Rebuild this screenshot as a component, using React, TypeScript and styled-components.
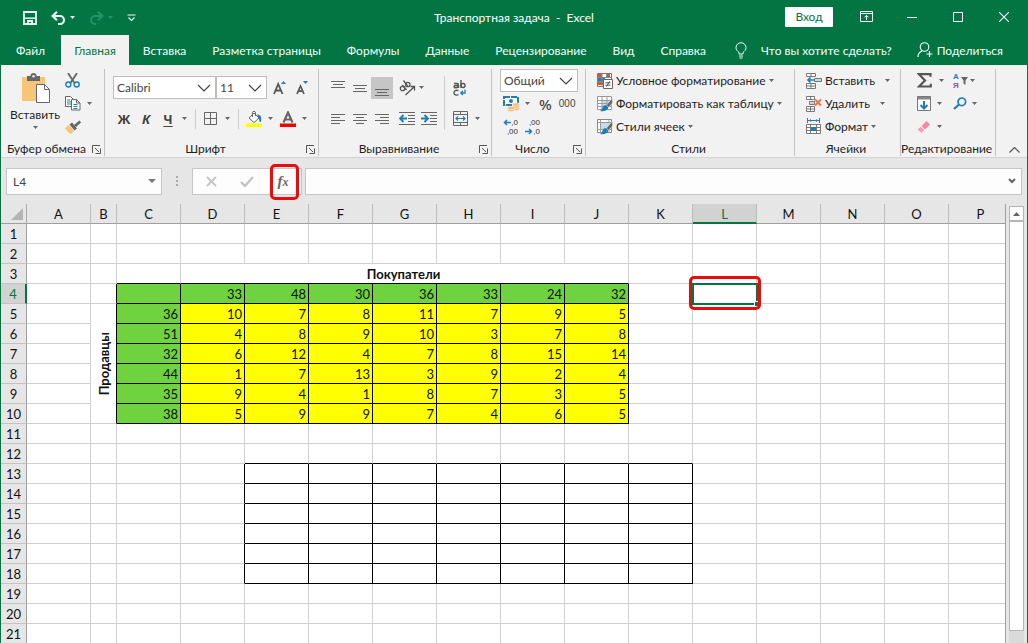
import React from "react";
import styled, { createGlobalStyle, css } from "styled-components";

const GREEN = "#037543";
const INK = "#1f1f1f";
const GREY = "#666";
const BLUE = "#1e7fb8";

const UI = `Lato, "Noto Sans", sans-serif`;
const GLYPH = `"Noto Sans", sans-serif`;
const TINY = `"Liberation Sans", Arial, sans-serif`;

const GlobalStyle = createGlobalStyle`
  *, *::before, *::after { box-sizing: border-box; }
  body { margin: 0; font-family: ${UI}; font-size: 12px; color: ${INK}; }
  button, input, select { font: inherit; color: inherit; margin: 0; }
  button { border: 0; background: none; padding: 0; cursor: pointer; }
  svg { display: block; flex: none; }
`;

/* ---------- window frame ---------- */

const Window = styled.div`
  height: 100vh;
  display: flex;
  flex-direction: column;
  overflow: hidden;
  background: #e6e6e6;
  border-left: 1px solid ${GREEN};
  border-right: 1px solid ${GREEN};
`;

const TitleBar = styled.header`
  flex: none;
  height: 35px;
  display: grid;
  grid-template-columns: 1fr auto 1fr;
  align-items: center;
  background: ${GREEN};
  color: #fff;
`;

const QuickAccess = styled.div`
  display: flex;
  align-items: center;
  gap: 14px;
  padding-left: 22px;
`;

const QuickButton = styled.button<{ $faded?: boolean }>`
  display: flex;
  align-items: center;
  gap: 4px;
  height: 22px;
  color: ${(p) => (p.$faded ? "#1f9464" : "#e9fff4")};
`;

const Title = styled.h1`
  margin: 0;
  font-size: 12px;
  font-weight: 400;
  white-space: pre;
`;

const WindowControls = styled.div`
  display: flex;
  justify-content: flex-end;
  align-items: center;
  align-self: start;
`;

const SignIn = styled.button`
  height: 20px;
  width: 48px;
  margin-right: 10px;
  background: #fff;
  color: ${GREEN};
  border-radius: 1px;
`;

const ControlButton = styled.button`
  width: 46px;
  height: 33px;
  display: grid;
  place-items: center;
`;

const TabBar = styled.nav`
  flex: none;
  height: 30px;
  display: flex;
  background: ${GREEN};
  color: #fff;
  padding-left: 2px;
`;

const Tab = styled.button<{ $active?: boolean }>`
  padding: 0 13px;
  white-space: nowrap;
  color: ${(p) => (p.$active ? GREEN : "#f2fff9")};
  background: ${(p) => (p.$active ? "#f2f2f2" : "transparent")};
  ${(p) => p.$active && css`margin: 0 1px 0 3px;`}
`;

const TabAction = styled.button<{ $gap: number; $push?: boolean }>`
  display: flex;
  align-items: center;
  gap: ${(p) => p.$gap}px;
  white-space: nowrap;
  color: #f2fff9;
  margin-left: ${(p) => (p.$push ? "auto" : "16px")};
  margin-right: ${(p) => (p.$push ? "24px" : "0")};
`;

/* ---------- ribbon ---------- */

const Ribbon = styled.div`
  flex: none;
  height: 93px;
  display: flex;
  background: #f2f2f2;
  border-bottom: 1px solid #d2d2d2;
`;

const Group = styled.section<{ $width: number }>`
  flex: 0 0 ${(p) => p.$width}px;
  margin: 4px 0 1px;
  display: flex;
  flex-direction: column;
  border-right: 1px solid #c3c3c3;
`;

const GroupBody = styled.div`
  flex: 1;
  display: flex;
`;

const GroupFooter = styled.footer`
  height: 14px;
  display: flex;
  align-items: center;
  padding-right: 3px;
  white-space: nowrap;
`;

const GroupName = styled.span`
  flex: 1;
  text-align: center;
  line-height: 14px;
`;

const Stack = styled.div<{ $pad?: number }>`
  display: flex;
  flex-direction: column;
  padding-left: ${(p) => p.$pad ?? 0}px;
`;

/* Three 23px lines shared by the groups with small buttons. */
const Line = styled.div<{ $gap?: number }>`
  height: 23px;
  display: flex;
  align-items: center;
  gap: ${(p) => p.$gap ?? 0}px;
`;

/* Two taller lines used by the font and alignment groups. */
const TallStack = styled(Stack)`
  padding-top: 7px;
  gap: 8px;
`;

const TallLine = styled.div`
  height: 23px;
  display: flex;
  align-items: center;
`;

const ToolButton = styled.button<{ $gap?: number }>`
  display: flex;
  align-items: center;
  gap: ${(p) => p.$gap ?? 3}px;
  white-space: nowrap;
`;

const SquareButton = styled.button<{ $active?: boolean }>`
  width: 22px;
  height: 22px;
  display: grid;
  place-items: center;
  background: ${(p) => (p.$active ? "#c6c6c6" : "transparent")};
`;

const LetterButton = styled.button<{ $look: "bold" | "italic" | "underline" }>`
  width: 22px;
  height: 22px;
  font-family: ${GLYPH};
  font-size: 13px;
  font-weight: 700;
  color: #444;
  font-style: ${(p) => (p.$look === "italic" ? "italic" : "normal")};
  text-decoration: ${(p) => (p.$look === "underline" ? "underline" : "none")};
  text-underline-offset: 2px;
`;

const Divider = styled.span<{ $tall?: boolean }>`
  width: 1px;
  height: ${(p) => (p.$tall ? 54 : 20)}px;
  background: #cfcfcf;
`;

const PasteButton = styled.button`
  width: 56px;
  margin-left: 6px;
  padding-top: 4px;
  display: flex;
  flex-direction: column;
  align-items: center;
  gap: 3px;
  line-height: 16px;
  align-self: flex-start;
`;

const Combo = styled.label<{ $width: number }>`
  width: ${(p) => p.$width}px;
  height: 23px;
  display: grid;
  grid-template-columns: 1fr 22px;
  align-items: center;
  background: #fff;
  border: 1px solid #bdbdbd;
  color: #444;
`;

const ComboSelect = styled.select`
  grid-area: 1 / 1 / 2 / 3;
  width: 100%;
  height: 21px;
  border: 0;
  padding: 0 0 0 3px;
  background: transparent;
  appearance: none;
  outline: none;
`;

const ComboArrow = styled.span`
  grid-area: 1 / 2;
  justify-self: center;
  pointer-events: none;
`;

const CollapseButton = styled.button`
  margin-left: auto;
  width: 26px;
  display: flex;
  justify-content: center;
  align-items: flex-end;
  padding-bottom: 4px;
`;

/* ---------- formula bar ---------- */

const FormulaBar = styled.div`
  flex: none;
  height: 46px;
  display: flex;
  align-items: center;
  padding: 0 5px;
`;

const FieldBox = styled.label<{ $width?: number }>`
  height: 27px;
  ${(p) => (p.$width ? css`flex: none; width: ${p.$width}px;` : css`flex: 1;`)}
  display: flex;
  align-items: center;
  background: #fdfdfd;
  border: 1px solid #c6c6c6;
  padding-right: 5px;
`;

const Field = styled.input`
  flex: 1;
  min-width: 0;
  height: 23px;
  border: 0;
  outline: 0;
  background: transparent;
  padding: 0 6px;
  color: #444;
`;

const Grip = styled.span`
  width: 30px;
  display: grid;
  place-items: center;
`;

const FormulaButtons = styled.div`
  height: 27px;
  width: 110px;
  margin-right: 3px;
  display: flex;
  align-items: center;
  background: #fdfdfd;
  border: 1px solid #c6c6c6;
`;

const FormulaButton = styled.button`
  position: relative;
  width: 36px;
  height: 25px;
  display: grid;
  place-items: center;
`;

const FxText = styled.span`
  font-family: "Liberation Serif", serif;
  font-style: italic;
  font-weight: 700;
  font-size: 15px;
  line-height: 20px;
  color: #666;
  small {
    font-size: 12px;
  }
`;

const Highlight = styled.span<{ $inset: string }>`
  position: absolute;
  inset: ${(p) => p.$inset};
  border: 3px solid #e80c0c;
  border-radius: 5px;
  pointer-events: none;
`;

/* ---------- sheet ---------- */

const SheetArea = styled.main`
  flex: 1;
  min-height: 0;
  display: flex;
  overflow: hidden;
`;

const SheetClip = styled.div`
  flex: 1;
  min-width: 0;
  overflow: hidden;
  border-right: 1px solid #9f9f9f;
`;

/* The last column runs a little way under the scroll bar. */
const Grid = styled.table`
  width: calc(100% + 8px);
  table-layout: fixed;
  border-collapse: separate;
  border-spacing: 0;
  background: #fff;
  font-size: 13px;
  line-height: 16px;
  color: #111;
`;

const headBase = css`
  padding: 0;
  font-weight: 400;
  text-align: center;
  background: #e6e6e6;
  height: 20px;
`;

const Corner = styled.th`
  ${headBase}
  border-bottom: 1px solid #9f9f9f;
  border-right: 1px solid #ababab;
  svg { margin-left: auto; margin-right: 3px; }
`;

const ColHead = styled.th<{ $active?: boolean }>`
  ${headBase}
  padding-top: 1px;
  border-right: 1px solid #bcbcbc;
  border-bottom: 1px solid #9f9f9f;
  ${(p) =>
    p.$active &&
    css`
      background: #d2d2d2;
      color: ${GREEN};
      border-bottom: 2px solid ${GREEN};
    `}
`;

const RowHead = styled.th<{ $active?: boolean }>`
  ${headBase}
  border-bottom: 1px solid #c3c3c3;
  border-right: 1px solid #9f9f9f;
  ${(p) =>
    p.$active &&
    css`
      background: #d2d2d2;
      color: ${GREEN};
      border-right: 2px solid ${GREEN};
    `}
`;

type Fill = "none" | "green" | "yellow";
const FILLS: Record<Fill, string> = { none: "#fff", green: "#6fd33f", yellow: "#ffff00" };

const Cell = styled.td<{ $fill: Fill; $right: boolean; $bottom: boolean; $selected?: boolean }>`
  ${(p) => p.$selected && css`position: relative;`}
  height: 20px;
  padding: 0 2px 0 0;
  text-align: right;
  background: ${(p) => FILLS[p.$fill]};
  border-right: 1px solid ${(p) => (p.$right ? "#000" : "#d0d0d0")};
  border-bottom: 1px solid ${(p) => (p.$bottom ? "#000" : "#d0d0d0")};
`;

const MergedTitle = styled(Cell)`
  text-align: center;
  font-weight: 700;
`;

const MergedSide = styled(Cell)`
  padding: 0;
  font-weight: 700;
`;

const SideText = styled.span`
  display: block;
  margin: 0 auto;
  width: 16px;
  writing-mode: vertical-rl;
  transform: rotate(180deg);
`;

const Selection = styled.span`
  position: absolute;
  inset: -1px -2px -2px -1px;
  border: 2px solid ${GREEN};
  &::after {
    content: "";
    position: absolute;
    right: -3px;
    bottom: -3px;
    width: 5px;
    height: 5px;
    background: ${GREEN};
    border-left: 1px solid #fff;
    border-top: 1px solid #fff;
  }
`;

const ScrollBar = styled.div`
  flex: none;
  width: 21px;
  padding: 2px 3px 0 3px;
  display: flex;
  flex-direction: column;
`;

const ScrollUp = styled.button`
  height: 15px;
  display: grid;
  place-items: center;
  background: #fff;
  border: 1px solid #b5b5b5;
`;

const ScrollTrack = styled.div`
  flex: 1;
  background: #dadada;
  padding-bottom: 12px;
  display: flex;
`;

const ScrollThumb = styled.div`
  flex: 1;
  background: #fff;
  border: 1px solid #b5b5b5;
`;

/* ---------- icons ---------- */

type SvgProps = { w: number; h: number; children: React.ReactNode };
const Svg = ({ w, h, children }: SvgProps) => (
  <svg width={w} height={h} viewBox={`0 0 ${w} ${h}`} fill="none" aria-hidden="true">
    {children}
  </svg>
);

const Caret = ({ color = GREY }: { color?: string }) => (
  <Svg w={5} h={3}><path d="M0 0h5L2.500 3z" fill={color} /></Svg>
);

const Chevron = () => (
  <Svg w={14} h={8}><path d="M1 1l6 6 6-6" stroke="#444" strokeWidth="1.200" /></Svg>
);

const Launcher = () => (
  <Svg w={9} h={9}>
    <path d="M.5 8V.5H8M3 3l4 4M8.500 3.500V8.500H3.500" stroke="#555" />
  </Svg>
);

const SaveIcon = () => (
  <Svg w={14} h={14}>
    <path d="M1 1h12v12H1z" stroke="currentColor" strokeWidth="1.800" />
    <path d="M1 7.200h12" stroke="currentColor" strokeWidth="1.500" />
    <path d="M4 9h6v4H8v-2H6v2H4z" fill="currentColor" />
  </Svg>
);

const UndoIcon = () => (
  <Svg w={15} h={14}>
    <path d="M2 5h7a4 4 0 0 1 0 8H7" stroke="currentColor" strokeWidth="2.200" />
    <path d="M6 .8L1.600 5 6 9.200" stroke="currentColor" strokeWidth="2.200" />
  </Svg>
);

const RedoIcon = () => (
  <Svg w={15} h={14}>
    <path d="M13 5H6a4 4 0 0 0 0 8h1" stroke="currentColor" strokeWidth="2" />
    <path d="M9 .8L13.400 5 9 9.200" stroke="currentColor" strokeWidth="2" />
  </Svg>
);

const CustomizeIcon = () => (
  <Svg w={9} h={8}>
    <path d="M.5 1h8M1.500 3.500l3 3 3-3" stroke="currentColor" strokeWidth="1.200" />
  </Svg>
);

const BulbIcon = () => (
  <Svg w={12} h={17}>
    <path d="M4 12V10.500C2.500 9 1 8 1 5.700a5 5 0 0 1 10 0C11 8 9.500 9 8 10.500V12zM4 14h4M4.500 16h3" stroke="currentColor" />
  </Svg>
);

const ShareIcon = () => (
  <Svg w={16} h={16}>
    <circle cx="7.500" cy="5" r="4.300" stroke="currentColor" strokeWidth="1.100" />
    <path d="M1 15c0-3 1.500-5 4-6M12.500 9v6M9.500 12h6" stroke="currentColor" strokeWidth="1.200" />
  </Svg>
);

const RibbonOptionsIcon = () => (
  <Svg w={13} h={11}>
    <path d="M.5.5h12v10H.5zM.5 2.500h12M6.500 9V4.500M4.500 6.300l2-2 2 2" stroke="#fff" />
  </Svg>
);

const PasteIcon = () => (
  <Svg w={29} h={31}>
    <path d="M1 4h23v24H1z" fill="#f6c577" />
    <path d="M6 3h3.500a3 3 0 0 1 6 0H19v5H6z" fill="#666" />
    <circle cx="12.500" cy="3.300" r="1.200" fill="#f2f2f2" />
    <path d="M15.500 11.500h8l5 5v13h-13z" fill="#fff" stroke="#666" />
    <path d="M23.500 11.500v5h5" stroke="#666" />
  </Svg>
);

const ScissorsIcon = () => (
  <Svg w={15} h={15}>
    <path d="M3 0l6.500 10M12 0L5.500 10" stroke="#666" strokeWidth="1.800" />
    <circle cx="3.300" cy="11.500" r="2.500" stroke={BLUE} strokeWidth="1.400" />
    <circle cx="11.700" cy="11.500" r="2.500" stroke={BLUE} strokeWidth="1.400" />
  </Svg>
);

const CopyIcon = () => (
  <Svg w={16} h={15}>
    <path d="M.5.5h5l3 3v7h-8z" fill="#fff" stroke="#666" />
    <path d="M2 4h3M2 6h4M2 8h4" stroke={BLUE} />
    <path d="M6.500 3.500h5l3.500 3.500v7H6.500z" fill="#fff" stroke="#666" />
    <path d="M11.500 3.500V7H15" stroke="#666" />
    <path d="M8.500 8.500h4M8.500 10.500h4M8.500 12.500h4" stroke={BLUE} />
  </Svg>
);

const BrushIcon = () => (
  <Svg w={16} h={14}>
    <path d="M0 8l4-3 5 6-3 3C4 13 1 10 0 8z" fill="#f6c577" />
    <path d="M4.500 4.500L7 2.500l5 6-2.500 2z" fill="#666" />
    <path d="M9 5l5.500-4.500L16 2.500 11 7z" fill="#666" />
  </Svg>
);

const GrowIcon = ({ up }: { up?: boolean }) => (
  <Svg w={14} h={15}>
    {up ? (
      <>
        <path d="M1 14L5.200 4 9.500 14M2.500 10.500H8" stroke="#555" strokeWidth="1.800" />
        <path d="M8 4l2.500-3L13 4z" fill={BLUE} />
      </>
    ) : (
      <>
        <path d="M2 14L5.500 6 9 14M3.200 11.200h4.600" stroke="#555" strokeWidth="1.700" />
        <path d="M8 1l2.500 3L13 1z" fill={BLUE} />
      </>
    )}
  </Svg>
);

const BordersIcon = () => (
  <Svg w={13} h={13}><path d="M.5.5h12v12H.5zM6.500.5v12M.5 6.500h12" stroke="#666" /></Svg>
);

const FillIcon = () => (
  <Svg w={16} h={16}>
    <path d="M3 7l5-5 5 5-5 4.500z" fill="#fff" stroke="#666" />
    <path d="M6.500 6V1.500c0-1.500 3-1.500 3 0V5" stroke="#666" />
    <path d="M11 3.500c3.500 0 5 2 4 7.500-1.500 0-2-1-2-4z" fill={BLUE} />
    <path d="M0 12.500h16v3.500H0z" fill="#ffff00" />
  </Svg>
);

const FontColorIcon = () => (
  <Svg w={16} h={16}>
    <path d="M3.500 11.500L8 1.500l4.500 10M5 8.500h6" stroke="#666" strokeWidth="2.200" />
    <path d="M0 12.500h16v3.500H0z" fill="#f00000" />
  </Svg>
);

const LINES = {
  left: "M0 1.500h14M0 4.500h9M0 7.500h14M0 10.500h9",
  center: "M0 1.500h14M3 4.500h8M0 7.500h14M3 10.500h8",
  right: "M0 1.500h14M5 4.500h9M0 7.500h14M5 10.500h9",
};

const AlignIcon = ({ kind }: { kind: keyof typeof LINES }) => (
  <Svg w={14} h={12}><path d={LINES[kind]} stroke="#666" /></Svg>
);

const VAlignIcon = ({ y }: { y: number }) => (
  <Svg w={14} h={20}>
    <path d={`M0 ${y}.5h14M2 ${y + 3}.5h10M0 ${y + 6}.5h14`} stroke="#666" />
  </Svg>
);

const OrientationIcon = () => (
  <Svg w={17} h={16}>
    <g stroke="#555" strokeWidth="1.300">
      <circle cx="3.500" cy="8.500" r="2.200" />
      <path d="M3.500 5l4 5" />
      <circle cx="8.800" cy="4.500" r="2.200" />
      <path d="M4.500 .5l4 5.500M6.500 15l9-8.500M11.500 6.500h4v4" />
    </g>
  </Svg>
);

const IndentIcon = ({ out }: { out?: boolean }) => (
  <Svg w={16} h={13}>
    <path d="M0 .5h16M9 3.500h7M9 6.500h7M9 9.500h7M0 12.500h16" stroke="#666" />
    <path d={out ? "M8 6.500H2M4.500 3L1 6.500 4.500 10" : "M0 6.500h6M3.500 3L7 6.500 3.500 10"} stroke={BLUE} strokeWidth="1.900" />
  </Svg>
);

const WrapIcon = () => (
  <Svg w={13} h={16}>
    <g stroke="#555" strokeWidth="1.400">
      <path d="M1 3.500h3c1 0 1.500.5 1.500 1.500v3M5.500 5.500H2.500c-1.800 0-1.800 2.300 0 2.300 1.500 0 3-.8 3-1.800" />
      <path d="M8 0v8" />
      <circle cx="10" cy="5.500" r="2" />
      <path d="M5.500 10.700c-2.500-1-4.500 0-4.500 2s2 3 4.500 2" />
    </g>
    <path d="M12 9.500v3.500H8M9.800 11l-2 2 2 2" stroke={BLUE} strokeWidth="1.300" />
  </Svg>
);

const MergeIcon = () => (
  <Svg w={15} h={15}>
    <path d="M.5.5h14v14H.5zM.5 3.500h14M.5 11.500h14M7.500.5v3M7.500 11.500v3" stroke="#666" />
    <path d="M2.500 7.500h10M5 5.500l-2 2 2 2M10 5.500l2 2-2 2" stroke={BLUE} strokeWidth="1.200" />
  </Svg>
);

const CurrencyIcon = () => (
  <Svg w={17} h={16}>
    <path d="M1 1h14v8H1z" fill="#fff" stroke={BLUE} strokeWidth="2" strokeDasharray="6 1" />
    <circle cx="8" cy="5" r="2" fill={BLUE} />
    <g fill="#f6bb78" stroke="#f2f2f2" strokeWidth=".6">
      <ellipse cx="13" cy="13" rx="3.500" ry="1.700" />
      <ellipse cx="13" cy="10.800" rx="3.500" ry="1.700" />
      <ellipse cx="13" cy="8.500" rx="3.500" ry="1.700" />
      <ellipse cx="8" cy="14" rx="3.500" ry="1.700" />
      <ellipse cx="8" cy="12" rx="3.500" ry="1.700" />
    </g>
  </Svg>
);

const CondFormatIcon = () => (
  <Svg w={16} h={16}>
    <path d="M.5.5h14v13H.5z" fill="#fff" stroke="#777" />
    <path d="M1 1h4v3H1zM9 1h4v3H9z" fill="#d9532c" />
    <path d="M1 5h7v3H1z" fill={BLUE} />
    <path d="M1 9h5v3H1z" fill="#d9532c" />
    <path d="M.5 4.500h14M.5 8.500h6M5 .5v13M9.500.5v4" stroke="#888" />
    <path d="M6.500 6.500h9v9h-9z" fill="#fff" stroke="#666" />
    <path d="M8.500 9.800h5M8.500 12.200h5M12.500 8.500l-3 5" stroke="#555" />
  </Svg>
);

const StyleBrush = () => (
  <>
    <path d="M7 9.500c3-1.500 5 0 4 3-1 2.500-4.500 3-8 2.500C5.500 14 5 11 7 9.500z" fill={BLUE} />
    <path d="M9.500 9L15.500 2v5L11.500 11.500z" fill="#666" stroke="#f2f2f2" strokeWidth=".5" />
  </>
);

const TableFormatIcon = () => (
  <Svg w={16} h={16}>
    <path d="M.5.5h14v13H.5z" fill="#fff" stroke="#999" />
    <path d="M5 4.500h9.500v6H5z" fill="#c6dcec" />
    <path d="M.5 4.500h14M.5 7.500h14M.5 10.500h14M5 .5v13M10 .5v13" stroke="#999" />
    <StyleBrush />
  </Svg>
);

const CellStyleIcon = () => (
  <Svg w={16} h={16}>
    <path d="M.5.5h14v13H.5z" fill="#fff" stroke="#888" />
    <path d="M.5 3.500h14M3.500.5v13M.5 10.500h14M12 .5v13" stroke="#999" />
    <path d="M4 4h8v6H4z" fill="#c6dcec" />
    <StyleBrush />
  </Svg>
);

const InsertCellsIcon = () => (
  <Svg w={16} h={16}>
    <path d="M.5.5h9v3h-9zM5 .5v3M.5 10.500h9v5h-9zM5 10.500v5M.5 13h9" fill="#fff" stroke="#777" />
    <path d="M8.500 5.500h7v3h-7z" fill="#c6dcec" stroke="#777" />
    <path d="M8 7H2M4.500 4.500L2 7l2.500 2.500" stroke={BLUE} strokeWidth="1.700" />
  </Svg>
);

const DeleteCellsIcon = () => (
  <Svg w={16} h={16}>
    <path d="M.5.5h8v3h-8zM4.500.5v3M.5 10.500h8v5h-8zM4.500 10.500v5M.5 13h8" fill="#fff" stroke="#777" />
    <path d="M3.500 5.500h5v3h-5z" fill="#c6dcec" stroke="#777" />
    <path d="M9 3.500l6 6M15 3.500l-6 6" stroke="#f0714a" strokeWidth="2" />
  </Svg>
);

const FormatCellsIcon = () => (
  <Svg w={16} h={17}>
    <path d="M1.500 2.500h12M1.500 0v5M13.500 0v5" stroke={BLUE} />
    <path d="M3 2.500l2-1.500v3zM12 2.500L10 1v3z" fill={BLUE} />
    <path d="M.5 6.500h14v9H.5z" fill="#fff" stroke="#777" />
    <path d="M.5 9.500h14M.5 12.500h14M4.500 6.500v9M10.500 6.500v9" stroke="#777" />
    <path d="M5 9h5v4H5z" fill={BLUE} />
  </Svg>
);

const SumIcon = () => (
  <Svg w={15} h={15}>
    <path d="M13.500 3.800V1.200H2L8 7.500 2 13.500h11.800V10.800" stroke="#555" strokeWidth="2.200" />
  </Svg>
);

const FunnelIcon = () => (
  <Svg w={7} h={8}><path d="M0 0h7L4.500 3.500V8l-2-1.500v-3z" fill="#666" /></Svg>
);

const FillDownIcon = () => (
  <Svg w={14} h={15}>
    <path d="M.5.5h13v14H.5z" fill="#fff" stroke="#777" />
    <path d="M1 1h12v2.500H1z" fill="#888" />
    <path d="M7 5v7M3.500 9L7 12.500 10.500 9" stroke={BLUE} strokeWidth="2" />
  </Svg>
);

const FindIcon = () => (
  <Svg w={14} h={13}>
    <circle cx="8.800" cy="4.800" r="3.800" stroke={BLUE} strokeWidth="1.700" />
    <path d="M6 7.500L1 12" stroke={BLUE} strokeWidth="2.200" />
  </Svg>
);

const EraserIcon = () => (
  <Svg w={13} h={12}>
    <path d="M4.500 5L9.500 0 13 3.500 8 8.500z" fill="#fb86a6" />
    <path d="M3.800 5.700L7.200 9.200 4.500 12 .5 8.500z" fill="#fb9db8" />
  </Svg>
);

const SortLetters = styled.span`
  display: flex;
  flex-direction: column;
  font-family: ${TINY};
  font-size: 8px;
  font-weight: 700;
  line-height: 9px;
  color: ${BLUE};
  b { color: #9a4fae; }
`;

const NumberGlyph = styled.button<{ $large?: boolean }>`
  font-family: ${(p) => (p.$large ? GLYPH : TINY)};
  font-size: ${(p) => (p.$large ? 15 : 10)}px;
  line-height: 16px;
  font-weight: ${(p) => (p.$large ? 500 : 400)};
  color: #444;
`;

const Decimal = styled.button`
  display: grid;
  grid-template-rows: 9px 9px;
  width: 15px;
  font-family: ${TINY};
  font-size: 8px;
  line-height: 9px;
  color: #333;
`;

const DecimalLine = styled.span`
  display: flex;
  justify-content: flex-end;
  align-items: center;
`;

const SmallArrow = ({ left }: { left?: boolean }) => (
  <Svg w={8} h={7}>
    <path d={left ? "M8 3.500H2M4 1L1.500 3.500 4 6" : "M0 3.500h6M4 1l2.500 2.500L4 6"} stroke={BLUE} strokeWidth="1.500" />
  </Svg>
);

const Spacer = styled.span<{ $w: number }>`
  flex: none;
  width: ${(p) => p.$w}px;
`;

/* ---------- data ---------- */

const TABS = ["Файл", "Главная", "Вставка", "Разметка страницы", "Формулы", "Данные", "Рецензирование", "Вид", "Справка"];
const COLS = "ABCDEFGHIJKLMNOP".split("");

const DATA: Record<number, (number | null)[]> = {
  4: [null, 33, 48, 30, 36, 33, 24, 32],
  5: [36, 10, 7, 8, 11, 7, 9, 5],
  6: [51, 4, 8, 9, 10, 3, 7, 8],
  7: [32, 6, 12, 4, 7, 8, 15, 14],
  8: [44, 1, 7, 13, 3, 9, 2, 4],
  9: [35, 9, 4, 1, 8, 7, 3, 5],
  10: [38, 5, 9, 9, 7, 4, 6, 5],
};

const inCosts = (r: number, c: number) => r >= 4 && r <= 10 && c >= 2 && c <= 9;
const inPlan = (r: number, c: number) => r >= 13 && r <= 18 && c >= 4 && c <= 10;
const boxed = (r: number, c: number) => inCosts(r, c) || inPlan(r, c);

const fillOf = (r: number, c: number): Fill =>
  !inCosts(r, c) ? "none" : r === 4 || c === 2 ? "green" : "yellow";

const SheetRow = ({ row }: { row: number }) => (
  <tr>
    <RowHead scope="row" $active={row === 4}>{row}</RowHead>
    {COLS.map((name, c) => {
      if (row === 3 && c === 3)
        return (
          <MergedTitle key={name} colSpan={7} $fill="none" $right={false} $bottom>
            Покупатели
          </MergedTitle>
        );
      if (row === 3 && c > 3 && c < 10) return null;
      if (row === 5 && c === 1)
        return (
          <MergedSide key={name} rowSpan={6} $fill="none" $right $bottom={false}>
            <SideText>Продавцы</SideText>
          </MergedSide>
        );
      if (row > 5 && row < 11 && c === 1) return null;
      const selected = row === 4 && name === "L";
      return (
        <Cell
          key={name}
          $fill={fillOf(row, c)}
          $right={boxed(row, c) || boxed(row, c + 1)}
          $bottom={boxed(row, c) || boxed(row + 1, c)}
          $selected={selected}
        >
          {inCosts(row, c) ? DATA[row][c - 2] : null}
          {selected && (
            <>
              <Selection />
              <Highlight $inset="-8px -5px -7px -4px" />
            </>
          )}
        </Cell>
      );
    })}
  </tr>
);

const Footer = ({ name, launcher }: { name: string; launcher?: boolean }) => (
  <GroupFooter>
    <GroupName>{name}</GroupName>
    {launcher && <button aria-label={`${name}: параметры`}><Launcher /></button>}
  </GroupFooter>
);

export default function App() {
  return (
    <Window>
      <GlobalStyle />
      <TitleBar>
        <QuickAccess>
          <QuickButton aria-label="Сохранить"><SaveIcon /></QuickButton>
          <QuickButton aria-label="Отменить"><UndoIcon /><Caret color="#e9fff4" /></QuickButton>
          <QuickButton aria-label="Вернуть" $faded><RedoIcon /><Caret color="#1f9464" /></QuickButton>
          <QuickButton aria-label="Настройка панели"><CustomizeIcon /></QuickButton>
        </QuickAccess>
        <Title>{"Транспортная задача  -  Excel"}</Title>
        <WindowControls>
          <SignIn>Вход</SignIn>
          <ControlButton aria-label="Параметры ленты"><RibbonOptionsIcon /></ControlButton>
          <ControlButton aria-label="Свернуть"><Svg w={10} h={10}><path d="M0 5.500h10" stroke="#fff" /></Svg></ControlButton>
          <ControlButton aria-label="Развернуть"><Svg w={10} h={10}><path d="M.5.5h9v9h-9z" stroke="#fff" /></Svg></ControlButton>
          <ControlButton aria-label="Закрыть"><Svg w={10} h={10}><path d="M0 0l10 10M10 0L0 10" stroke="#fff" strokeWidth="1.100" /></Svg></ControlButton>
        </WindowControls>
      </TitleBar>

      <TabBar>
        {TABS.map((t) => <Tab key={t} $active={t === "Главная"}>{t}</Tab>)}
        <TabAction $gap={14}><BulbIcon />Что вы хотите сделать?</TabAction>
        <TabAction $gap={4} $push><ShareIcon />Поделиться</TabAction>
      </TabBar>

      <Ribbon>
        <Group $width={104}>
          <GroupBody>
            <PasteButton><PasteIcon />Вставить<Caret /></PasteButton>
            <Stack $pad={2}>
              <Line><ToolButton aria-label="Вырезать"><ScissorsIcon /></ToolButton></Line>
              <Line><ToolButton aria-label="Копировать" $gap={6}><CopyIcon /><Caret /></ToolButton></Line>
              <Line><ToolButton aria-label="Формат по образцу"><BrushIcon /></ToolButton></Line>
            </Stack>
          </GroupBody>
          <Footer name="Буфер обмена" launcher />
        </Group>

        <Group $width={214}>
          <GroupBody>
            <TallStack $pad={8}>
              <TallLine>
                <Combo $width={103}>
                  <ComboSelect aria-label="Шрифт"><option>Calibri</option></ComboSelect>
                  <ComboArrow><Chevron /></ComboArrow>
                </Combo>
                <Combo $width={51}>
                  <ComboSelect aria-label="Размер шрифта"><option>11</option></ComboSelect>
                  <ComboArrow><Chevron /></ComboArrow>
                </Combo>
                <Spacer $w={6} />
                <ToolButton aria-label="Увеличить размер"><GrowIcon up /></ToolButton>
                <Spacer $w={8} />
                <ToolButton aria-label="Уменьшить размер"><GrowIcon /></ToolButton>
              </TallLine>
              <TallLine>
                <LetterButton $look="bold">Ж</LetterButton>
                <LetterButton $look="italic">К</LetterButton>
                <LetterButton $look="underline">Ч</LetterButton>
                <Spacer $w={3} />
                <ToolButton aria-label="Вид подчёркивания"><Caret /></ToolButton>
                <Spacer $w={8} />
                <Divider />
                <Spacer $w={8} />
                <ToolButton aria-label="Границы" $gap={8}><BordersIcon /><Caret /></ToolButton>
                <Spacer $w={8} />
                <Divider />
                <Spacer $w={7} />
                <ToolButton aria-label="Цвет заливки" $gap={6}><FillIcon /><Caret /></ToolButton>
                <Spacer $w={7} />
                <ToolButton aria-label="Цвет шрифта" $gap={6}><FontColorIcon /><Caret /></ToolButton>
              </TallLine>
            </TallStack>
          </GroupBody>
          <Footer name="Шрифт" launcher />
        </Group>

        <Group $width={173}>
          <GroupBody>
            <TallStack $pad={8}>
              <TallLine>
                <SquareButton aria-label="По верхнему краю"><VAlignIcon y={3} /></SquareButton>
                <SquareButton aria-label="По середине"><VAlignIcon y={7} /></SquareButton>
                <SquareButton aria-label="По нижнему краю" $active><VAlignIcon y={11} /></SquareButton>
                <Spacer $w={6} />
                <ToolButton aria-label="Ориентация"><OrientationIcon /><Caret /></ToolButton>
              </TallLine>
              <TallLine>
                <SquareButton aria-label="По левому краю"><AlignIcon kind="left" /></SquareButton>
                <SquareButton aria-label="По центру"><AlignIcon kind="center" /></SquareButton>
                <SquareButton aria-label="По правому краю"><AlignIcon kind="right" /></SquareButton>
                <Spacer $w={3} />
                <SquareButton aria-label="Уменьшить отступ"><IndentIcon out /></SquareButton>
                <SquareButton aria-label="Увеличить отступ"><IndentIcon /></SquareButton>
              </TallLine>
            </TallStack>
            <TallStack $pad={4}><Divider $tall /></TallStack>
            <TallStack $pad={8}>
              <TallLine><ToolButton aria-label="Перенести текст"><WrapIcon /></ToolButton></TallLine>
              <TallLine><ToolButton aria-label="Объединить ячейки" $gap={7}><MergeIcon /><Caret /></ToolButton></TallLine>
            </TallStack>
          </GroupBody>
          <Footer name="Выравнивание" launcher />
        </Group>

        <Group $width={94}>
          <GroupBody>
            <Stack $pad={8}>
              <Line>
                <Combo $width={78}>
                  <ComboSelect aria-label="Числовой формат"><option>Общий</option></ComboSelect>
                  <ComboArrow><Chevron /></ComboArrow>
                </Combo>
              </Line>
              <Line>
                <Spacer $w={3} />
                <ToolButton aria-label="Финансовый формат" $gap={5}><CurrencyIcon /><Caret /></ToolButton>
                <Spacer $w={9} />
                <NumberGlyph $large>%</NumberGlyph>
                <Spacer $w={7} />
                <NumberGlyph>000</NumberGlyph>
              </Line>
              <Line>
                <Spacer $w={3} />
                <Decimal aria-label="Увеличить разрядность">
                  <DecimalLine><SmallArrow left />,0</DecimalLine>
                  <DecimalLine>,00</DecimalLine>
                </Decimal>
                <Spacer $w={7} />
                <Decimal aria-label="Уменьшить разрядность">
                  <DecimalLine>,00</DecimalLine>
                  <DecimalLine><SmallArrow />,0</DecimalLine>
                </Decimal>
              </Line>
            </Stack>
          </GroupBody>
          <Footer name="Число" launcher />
        </Group>

        <Group $width={209}>
          <GroupBody>
            <Stack $pad={11}>
              <Line><ToolButton><CondFormatIcon />Условное форматирование<Caret /></ToolButton></Line>
              <Line><ToolButton><TableFormatIcon />Форматировать как таблицу<Caret /></ToolButton></Line>
              <Line><ToolButton><CellStyleIcon />Стили ячеек<Caret /></ToolButton></Line>
            </Stack>
          </GroupBody>
          <Footer name="Стили" />
        </Group>

        <Group $width={106}>
          <GroupBody>
            <Stack $pad={11}>
              <Line $gap={10}><ToolButton><InsertCellsIcon />Вставить</ToolButton><Caret /></Line>
              <Line $gap={10}><ToolButton><DeleteCellsIcon />Удалить</ToolButton><Caret /></Line>
              <Line><ToolButton><FormatCellsIcon />Формат<Caret /></ToolButton></Line>
            </Stack>
          </GroupBody>
          <Footer name="Ячейки" />
        </Group>

        <Group $width={95}>
          <GroupBody>
            <Stack $pad={16}>
              <Line><ToolButton aria-label="Автосумма" $gap={7}><SumIcon /><Caret /></ToolButton></Line>
              <Line><ToolButton aria-label="Заполнить" $gap={6}><FillDownIcon /><Caret /></ToolButton></Line>
              <Line><ToolButton aria-label="Очистить" $gap={7}><EraserIcon /><Caret /></ToolButton></Line>
            </Stack>
            <Stack $pad={9}>
              <Line>
                <ToolButton aria-label="Сортировка и фильтр" $gap={2}>
                  <SortLetters><span>А</span><b>Я</b></SortLetters>
                  <FunnelIcon />
                  <Caret />
                </ToolButton>
              </Line>
              <Line><ToolButton aria-label="Найти и выделить" $gap={5}><FindIcon /><Caret /></ToolButton></Line>
            </Stack>
          </GroupBody>
          <Footer name="Редактирование" />
        </Group>

        <CollapseButton aria-label="Свернуть ленту">
          <Svg w={11} h={6}><path d="M.5 5.500l5-5 5 5" stroke="#555" strokeWidth="1.200" /></Svg>
        </CollapseButton>
      </Ribbon>

      <FormulaBar>
        <FieldBox $width={156}>
          <Field aria-label="Имя" defaultValue="L4" />
          <Svg w={8} h={4}><path d="M0 0h8L4 4z" fill="#777" /></Svg>
        </FieldBox>
        <Grip>
          <Svg w={3} h={12}><path d="M0 1h2v2H0zM0 5h2v2H0zM0 9h2v2H0z" fill="#ababab" /></Svg>
        </Grip>
        <FormulaButtons>
          <FormulaButton aria-label="Отмена">
            <Svg w={11} h={11}><path d="M1 1l9 9M10 1l-9 9" stroke="#c4c4c4" strokeWidth="1.800" /></Svg>
          </FormulaButton>
          <FormulaButton aria-label="Ввод">
            <Svg w={14} h={11}><path d="M1 6l4 4 8-9" stroke="#c4c4c4" strokeWidth="2.400" /></Svg>
          </FormulaButton>
          <FormulaButton aria-label="Вставить функцию">
            <FxText>f<small>x</small></FxText>
            <Highlight $inset="-5px 2px -6px 5px" />
          </FormulaButton>
        </FormulaButtons>
        <FieldBox>
          <Field aria-label="Строка формул" defaultValue="" />
          <Svg w={8} h={6}><path d="M1 1l3 3 3-3" stroke="#666" strokeWidth="2" /></Svg>
        </FieldBox>
      </FormulaBar>

      <SheetArea>
        <SheetClip>
          <Grid>
            <colgroup>
              <col width={26} />
              {COLS.slice(0, -1).map((c) => <col key={c} width={c === "B" ? 26 : 64} />)}
              <col />
            </colgroup>
            <thead>
              <tr>
                <Corner><Svg w={12} h={12}><path d="M12 0v12H0z" fill="#b4b4b4" /></Svg></Corner>
                {COLS.map((c) => (
                  <ColHead key={c} scope="col" $active={c === "L"}>{c}</ColHead>
                ))}
              </tr>
            </thead>
            <tbody>
              {Array.from({ length: 21 }, (_, i) => <SheetRow key={i} row={i + 1} />)}
            </tbody>
          </Grid>
        </SheetClip>
        <ScrollBar>
          <ScrollUp aria-label="Вверх"><Svg w={7} h={4}><path d="M0 4h7L3.500 0z" fill="#666" /></Svg></ScrollUp>
          <ScrollTrack><ScrollThumb /></ScrollTrack>
        </ScrollBar>
      </SheetArea>
    </Window>
  );
}
